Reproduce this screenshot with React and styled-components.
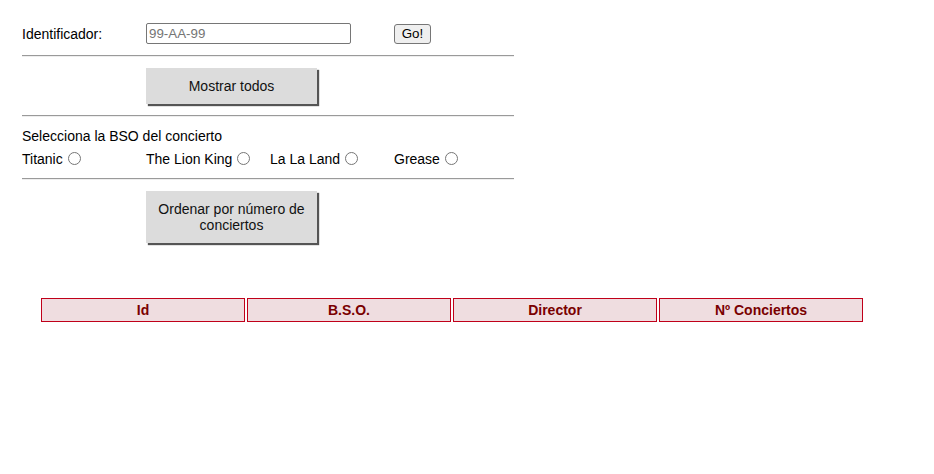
import React from 'react';
import styled, { createGlobalStyle } from 'styled-components';

const GlobalStyle = createGlobalStyle`
    body {
        margin: 8px;
        background: #fff;
        font-family: "Liberation Sans", Arial, sans-serif;
        font-size: 14px;
        color: #000;
    }
`;

let Page = styled.div`
    padding: 15px 14px 0;
`;

let Form = styled.form`
    width: 492px;
`;

let Row = styled.div`
    display: grid;
    grid-template-columns: repeat(4, 124px);
    align-items: center;
    line-height: ${props => props.lh || 'normal'};
    margin-top: ${props => props.mt || 0};
`;

let Label = styled.label`
    font-size: 14px;
`;

let TextInput = styled.input`
    grid-column: 2 / span 2;
    box-sizing: border-box;
    width: 205px;
    height: 21px;
    padding: 1px 2px;
    border: 1px solid #767676;
    border-radius: 2px;
    font-family: "Liberation Sans", Arial, sans-serif;
    font-size: 13.33px;
    &::placeholder {
        color: #757575;
    }
`;

let SmallButton = styled.button`
    grid-column: 4;
    justify-self: start;
    box-sizing: border-box;
    width: 37px;
    height: 20px;
    padding: 0;
    background: #efefef;
    border: 1px solid #767676;
    border-radius: 3px;
    font-family: "Liberation Sans", Arial, sans-serif;
    font-size: 13.33px;
    color: #000;
`;

let Divider = styled.hr`
    height: 0;
    margin: 11px 0;
    border: 0;
    border-top: 1px solid #9a9a9a;
    border-bottom: 1px solid #eeeeee;
`;

let BigButton = styled.button`
    grid-column: 2 / span 2;
    justify-self: start;
    box-sizing: border-box;
    width: 171px;
    height: ${props => props.h || '36px'};
    padding: 0 8px;
    background: #dcdcdc;
    border: none;
    box-shadow: 2px 2px 1px #555;
    font-family: "Liberation Sans", Arial, sans-serif;
    font-size: 14px;
    line-height: 16px;
    color: #111;
`;

let Title = styled.div`
    line-height: 16px;
`;

let RadioLabel = styled.label`
    display: flex;
    align-items: center;
    white-space: nowrap;
    input {
        margin: 0 0 2px 5px;
        width: 13px;
        height: 13px;
    }
`;

let Table = styled.table`
    margin: 53px 0 0 17px;
    width: 826px;
    border-spacing: 2px;
`;

let Th = styled.th`
    width: 25%;
    height: 24px;
    box-sizing: border-box;
    padding: 0;
    background: #efdde0;
    border: 1px solid #c0001a;
    color: #7a0000;
    font-size: 14px;
    font-weight: bold;
`;

const bsos = ['Titanic', 'The Lion King', 'La La Land', 'Grease'];
const columns = ['Id', 'B.S.O.', 'Director', 'Nº Conciertos'];

export default function App() {
    return (
        <Page>
            <GlobalStyle />
            <Form onSubmit={e => e.preventDefault()}>
                <Row>
                    <Label>Identificador:</Label>
                    <TextInput type="text" placeholder="99-AA-99" />
                    <SmallButton type="button">Go!</SmallButton>
                </Row>
                <Divider />
                <Row>
                    <BigButton type="button">Mostrar todos</BigButton>
                </Row>
                <Divider />
                <Title>Selecciona la BSO del concierto</Title>
                <Row lh="16px" mt="7px">
                    {bsos.map(b =>
                        <RadioLabel key={b}>
                            {b} <input type="radio" name="bso" value={b} />
                        </RadioLabel>
                    )}
                </Row>
                <Divider />
                <Row>
                    <BigButton type="button" h="52px">Ordenar por número de conciertos</BigButton>
                </Row>
            </Form>
            <Table>
                <thead>
                    <tr>
                        {columns.map(c => <Th key={c}>{c}</Th>)}
                    </tr>
                </thead>
            </Table>
        </Page>
    );
}
